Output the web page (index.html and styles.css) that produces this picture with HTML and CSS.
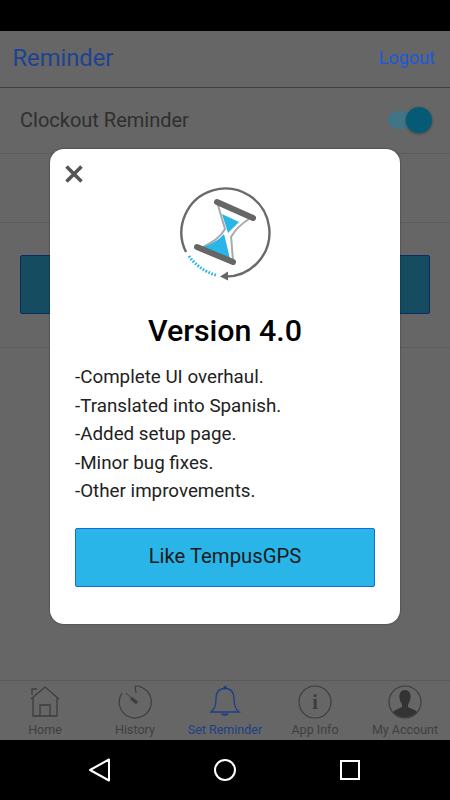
FILE: index.html
```html
<!DOCTYPE html>
<html lang="en">
<head>
    <meta charset="UTF-8">
    <meta name="viewport" content="width=device-width, initial-scale=1.0">
    <title>Reminder</title>
    <link rel="stylesheet" href="styles.css">
</head>
<body>
    <div class="status-bar"></div>

    <div class="app">
        <header class="header">
            <h1 class="title">Reminder</h1>
            <a class="logout">Logout</a>
        </header>

        <div class="row row-switch">
            <span>Clockout Reminder</span>
            <div class="switch"><div class="switch-knob"></div></div>
        </div>
        <div class="row row-blank"></div>
        <div class="row row-action">
            <div class="action-btn"></div>
        </div>

        <nav class="tabs">
            <div class="tab">
                <svg class="tab-icon" viewBox="0 0 36 36" fill="none" stroke="#3d3d3d" stroke-width="1.3">
                    <path d="M4 15 18 3 32 15"/>
                    <path d="M5 11V5H10"/>
                    <path d="M6 14V32H30V14"/>
                    <path d="M13 32V21H23V32"/>
                </svg>
                <span>Home</span>
            </div>
            <div class="tab">
                <svg class="tab-icon" viewBox="0 0 36 36" fill="none" stroke="#3d3d3d" stroke-width="1.2">
                    <path d="M18 2A16 16 0 1 1 5 9"/>
                    <path d="M18 2 19 9"/>
                    <path d="M9 9 20 19" stroke-width="1"/>
                    <path d="M14 14 20 19" stroke-width="3"/>
                </svg>
                <span>History</span>
            </div>
            <div class="tab tab-active">
                <svg class="tab-icon" viewBox="0 0 36 36" fill="none" stroke="#1c3f87" stroke-width="1.3">
                    <path d="M4 28C8 25 9 20 9 15C9 8 12.500 4.500 18 4.500C23.500 4.500 27 8 27 15C27 20 28 25 32 28Z"/>
                    <circle cx="18" cy="3.500" r="1" fill="#1c3f87"/>
                    <path d="M14 29.500H22C21 32.500 15 32.500 14 29.500Z" fill="#1c3f87" stroke="none"/>
                </svg>
                <span>Set Reminder</span>
            </div>
            <div class="tab">
                <svg class="tab-icon" viewBox="0 0 36 36" fill="none" stroke="#3d3d3d" stroke-width="1.2">
                    <circle cx="18" cy="18" r="16"/>
                    <text class="info-i" x="18" y="24.500" text-anchor="middle">i</text>
                </svg>
                <span>App Info</span>
            </div>
            <div class="tab">
                <svg class="tab-icon" viewBox="0 0 36 36">
                    <circle cx="18" cy="18" r="16" fill="none" stroke="#3d3d3d" stroke-width="1.2"/>
                    <path d="M18 6C13.500 6 12 10 12.500 14C13 17 14 19 15 20.500V23C12 25 8 25.500 6 28C9 31.500 13.500 33.500 18 33.500C22.500 33.500 27 31.500 30 28C28 25.500 24 25 21 23V20.500C22 19 23 17 23.500 14C24 10 22.500 6 18 6Z" fill="#333"/>
                </svg>
                <span>My Account</span>
            </div>
        </nav>
    </div>

    <div class="nav-bar">
        <svg class="nav-icon" viewBox="0 0 24 24" fill="none" stroke="#fff" stroke-width="2" stroke-linejoin="round">
            <path d="M21 1.500V22.500L2 12Z"/>
        </svg>
        <svg class="nav-icon" viewBox="0 0 24 24" fill="none" stroke="#fff" stroke-width="2">
            <circle cx="12" cy="12" r="10"/>
        </svg>
        <svg class="nav-icon" viewBox="0 0 24 24" fill="none" stroke="#fff" stroke-width="2">
            <rect x="3" y="3" width="18" height="18"/>
        </svg>
    </div>

    <div class="modal">
        <svg class="close" viewBox="0 0 18 18" stroke="#555" stroke-width="3.600">
            <path d="M1.500 1.500 16.500 16.500M16.500 1.500 1.500 16.500"/>
        </svg>
        <svg class="logo" viewBox="177 185 96 96" fill="none">
            <path d="M186 252A44 44 0 1 1 224 276.500" stroke="#6a6a6a" stroke-width="2.400"/>
            <path d="M228 271.500 220 276.500 228 280.500" fill="#666"/>
            <path d="M189 256C195 265 205 272 217 275.500" stroke="#29b5e8" stroke-width="3" stroke-dasharray="1.700 1.500"/>
            <path d="M218 205C221 216 223 222 225 229C220 238 212 242 203 247M249 219C241 224 235 230 231 237C232 244 232 252 233 259" stroke="#aaa" stroke-width="2"/>
            <path d="M222 214 239 222 228 233Z" fill="#29b5e8"/>
            <path d="M203 247C213 243 219 240 224 234C226 242 228 250 230 259Z" fill="#29b5e8"/>
            <path d="M217 202 253 218M197 247 233 262" stroke="#666" stroke-width="6" stroke-linecap="round"/>
        </svg>
        <h2 class="version">Version 4.0</h2>
        <ul class="changes">
            <li>-Complete UI overhaul.</li>
            <li>-Translated into Spanish.</li>
            <li>-Added setup page.</li>
            <li>-Minor bug fixes.</li>
            <li>-Other improvements.</li>
        </ul>
        <div class="like-btn">Like TempusGPS</div>
    </div>
</body>
</html>
```
FILE: styles.css
```css
body {
    margin: 0;
    width: 450px;
    height: 800px;
    overflow: hidden;
    display: flex;
    flex-direction: column;
    font-family: Roboto, "Liberation Sans", sans-serif;
    background: #000;
}
.status-bar {
    height: 31px;
    background: #000;
}
.app {
    flex: 1;
    display: flex;
    flex-direction: column;
    background: #666;
}
.header {
    height: 56px;
    box-sizing: content-box;
    display: flex;
    align-items: center;
    justify-content: space-between;
    padding: 0 15px 0 12.500px;
    border-bottom: 1px solid #3f3f3f;
}
.title {
    margin: 0 0 2px;
    font-size: 23.700px;
    font-weight: 400;
    color: #1c4391;
}
.logout {
    margin-bottom: 3px;
    font-size: 18px;
    color: #1c59dc;
}
.row {
    border-bottom: 1px solid #5b5b5b;
    box-sizing: border-box;
}
.row-switch {
    height: 66px;
    display: flex;
    align-items: center;
    justify-content: space-between;
    padding: 0 19px 2px 20px;
    font-size: 20px;
    color: #2f2f2f;
}
.switch {
    width: 43px;
    height: 18px;
    border-radius: 9px;
    background: #3f7586;
    position: relative;
}
.switch-knob {
    position: absolute;
    right: -1px;
    top: -4px;
    width: 26px;
    height: 26px;
    border-radius: 50%;
    background: #055a75;
    box-shadow: 0 1px 3px rgba(0, 0, 0, 0.35);
}
.row-blank {
    height: 69px;
}
.row-action {
    height: 125px;
    padding: 32px 20px 0;
}
.action-btn {
    height: 59px;
    box-sizing: border-box;
    background: #154c5f;
    border: 1px solid #0b2a66;
    border-radius: 2px;
}
.tabs {
    margin-top: auto;
    height: 60px;
    box-sizing: border-box;
    display: flex;
    border-top: 1px solid #595959;
}
.tab {
    width: 90px;
    display: flex;
    flex-direction: column;
    align-items: center;
    font-size: 12.500px;
    color: #3f3f3f;
    white-space: nowrap;
}
.tab-active {
    color: #1c3f87;
}
.tab-icon {
    width: 36px;
    height: 36px;
    margin-top: 3px;
    margin-bottom: 2px;
}
.info-i {
    font-family: "Liberation Serif", serif;
    font-size: 20px;
    font-weight: 700;
    fill: #3d3d3d;
    stroke: none;
}
.nav-bar {
    height: 60px;
    background: #000;
    display: flex;
    align-items: center;
    justify-content: center;
    gap: 101px;
}
.nav-icon {
    width: 24px;
    height: 24px;
}
.modal {
    position: absolute;
    left: 50px;
    top: 149px;
    width: 350px;
    height: 475px;
    box-sizing: border-box;
    padding: 36px 25px 0;
    background: #fff;
    border-radius: 14px;
    box-shadow: 0 0 2px rgba(0, 0, 0, 0.5);
    display: flex;
    flex-direction: column;
    align-items: center;
}
.close {
    position: absolute;
    left: 15px;
    top: 16px;
    width: 18px;
    height: 18px;
}
.logo {
    width: 96px;
    height: 96px;
    flex: none;
}
.version {
    margin: 32px 0 0;
    font-size: 30.400px;
    line-height: 36px;
    font-weight: 500;
    color: #000;
}
.changes {
    list-style: none;
    align-self: stretch;
    margin: 14px 0 0;
    padding: 0;
    font-size: 18.800px;
    line-height: 28.600px;
    color: #222;
}
.like-btn {
    align-self: stretch;
    height: 59px;
    box-sizing: border-box;
    margin-top: 22px;
    padding-bottom: 2px;
    display: flex;
    align-items: center;
    justify-content: center;
    background: #29b5e8;
    border: 1px solid #1a66e0;
    border-radius: 2px;
    font-size: 20.300px;
    color: #1a1a1a;
}
```
